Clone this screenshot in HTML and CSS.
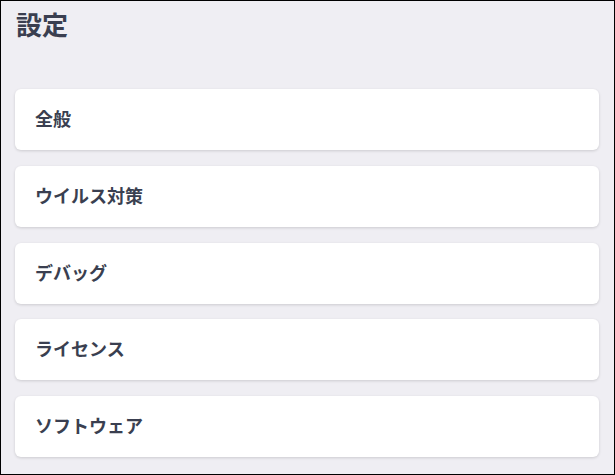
FILE: index.html
```html
<!DOCTYPE html>
<html>
<head>
    <link rel="stylesheet" href="styles.css">
</head>
<body>
    <div class="page">
        <h1 class="title">設定</h1>
        <div class="menu">
            <div class="item">全般</div>
            <div class="item">ウイルス対策</div>
            <div class="item">デバッグ</div>
            <div class="item">ライセンス</div>
            <div class="item">ソフトウェア</div>
        </div>
    </div>
</body>
</html>
```

FILE: styles.css
```css
html, body {
    margin: 0;
    padding: 0;
}
body {
    font-family: "Noto Sans CJK JP", "Noto Sans", sans-serif;
    color: #3a3f50;
}
.page {
    box-sizing: border-box;
    width: 615px;
    height: 475px;
    border: 1px solid #000;
    background-color: #efeef3;
    padding: 0 15px 0 14px;
    overflow: hidden;
}
.title {
    font-size: 26px;
    font-weight: bold;
    line-height: 34px;
    margin: 6px 0 0 1px;
}
.menu {
    display: flex;
    flex-direction: column;
    gap: 15.75px;
    margin-top: 48px;
}
.item {
    background-color: white;
    border-radius: 6px;
    box-shadow: 0 1px 3px rgba(0, 0, 0, 0.15);
    height: 61px;
    box-sizing: border-box;
    display: flex;
    align-items: center;
    padding: 0 0 3px 20px;
    font-size: 18px;
    font-weight: bold;
}
```
